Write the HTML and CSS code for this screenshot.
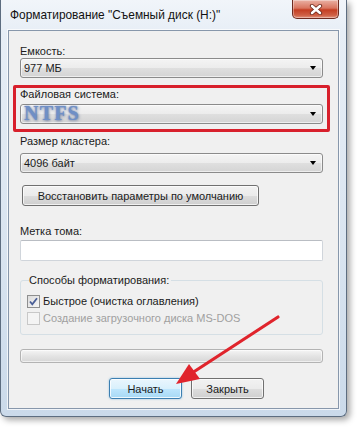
FILE: index.html
```
<!DOCTYPE html>
<html lang="ru">
<head>
    <meta charset="UTF-8">
    <title>Форматирование</title>
    <link rel="stylesheet" href="styles.css">
</head>
<body>
    <div class="window">
        <div class="titlebar">
            <span class="title">Форматирование "Съемный диск (H:)"</span>
            <div class="close-btn">
                <svg width="14" height="11" viewBox="0 0 14 11">
                    <path d="M3 2 L11 9 M11 2 L3 9" stroke="#6a2416" stroke-width="4.2" stroke-linecap="round"/>
                    <path d="M3 2 L11 9 M11 2 L3 9" stroke="#fff" stroke-width="2.6" stroke-linecap="round"/>
                </svg>
            </div>
        </div>

        <div class="client">
            <div class="label">Емкость:</div>
            <div class="combo">
                <span>977 МБ</span>
                <i class="combo-arrow"></i>
            </div>

            <div class="highlight">
                <div class="label">Файловая система:</div>
                <div class="combo">
                    <span class="ntfs">NTFS</span>
                    <i class="combo-arrow"></i>
                </div>
            </div>

            <div class="label cluster-label">Размер кластера:</div>
            <div class="combo cluster-combo">
                <span>4096 байт</span>
                <i class="combo-arrow"></i>
            </div>

            <div class="btn restore-btn">Восстановить параметры по умолчанию</div>

            <div class="label volume-label">Метка тома:</div>
            <div class="text-input"></div>

            <fieldset class="group">
                <legend>Способы форматирования:</legend>
                <div class="check-row first">
                    <span class="checkbox checked">
                        <svg width="11" height="11" viewBox="0 0 11 11">
                            <path d="M2 5.5 L4.3 8.3 L9 2.2" fill="none" stroke="#4a5f97" stroke-width="1.8"/>
                        </svg>
                    </span>
                    <span>Быстрое (очистка оглавления)</span>
                </div>
                <div class="check-row disabled">
                    <span class="checkbox"></span>
                    <span>Создание загрузочного диска MS-DOS</span>
                </div>
            </fieldset>

            <div class="progress"></div>

            <div class="actions">
                <div class="btn btn-default">Начать</div>
                <div class="btn">Закрыть</div>
            </div>
        </div>
    </div>

    <svg class="pointer" width="357" height="427" viewBox="0 0 357 427">
        <line x1="278" y1="317" x2="192" y2="373" stroke="#e0242c" stroke-width="3.2" stroke-linecap="round"/>
        <polygon points="176,384 200,379 189,364" fill="#e0242c"/>
    </svg>
</body>
</html>
```

FILE: styles.css
```
* {
    box-sizing: border-box;
    margin: 0;
    padding: 0;
}

body {
    background: #fff;
    font-family: 'Liberation Sans', sans-serif;
    font-size: 11px;
    color: #1b1b1b;
    position: relative;
    width: 357px;
    height: 427px;
    overflow: hidden;
}

/* window frame */
.window {
    width: 347px;
    padding: 0 7px 7px 7px;
    border: 1px solid #5d6d80;
    border-top: none;
    border-radius: 0 0 6px 6px;
    background: linear-gradient(180deg, #f1f5fa 0%, #e7eef6 8%, #d9e4f0 60%, #cbdaea 100%);
    box-shadow: 3px 3px 6px rgba(0, 0, 0, 0.35);
}

.titlebar {
    height: 30px;
    display: flex;
    align-items: flex-start;
}

.title {
    padding: 8px 0 0 2px;
    font-size: 11.9px;
    color: #111;
}

.close-btn {
    margin-left: auto;
    width: 47px;
    height: 19px;
    display: flex;
    align-items: center;
    justify-content: center;
    border: 1px solid #6e2b20;
    border-top: none;
    border-radius: 0 0 5px 5px;
    background: linear-gradient(180deg, #eab1a4 0%, #d9755f 45%, #c43e22 55%, #cf6146 85%, #e2957f 100%);
    box-shadow: inset 0 0 0 1px rgba(255, 255, 255, 0.35);
}

/* client area */
.client {
    background: #f0f0f0;
    border: 1px solid #8797ab;
    box-shadow: 0 0 0 1px rgba(255, 255, 255, 0.7);
    padding: 14px 15px 9px 11px;
}

.label {
    line-height: 13px;
    height: 13px;
}

.combo {
    height: 20px;
    display: flex;
    align-items: center;
    justify-content: space-between;
    padding: 0 6px 0 3px;
    border: 1px solid #8b8b8b;
    border-radius: 3px;
    background: linear-gradient(180deg, #f4f4f4 0%, #ececec 50%, #dfdfdf 51%, #d4d4d4 100%);
    box-shadow: inset 0 0 0 1px rgba(255, 255, 255, 0.6);
}

.combo-arrow {
    width: 0;
    height: 0;
    border-left: 3.5px solid transparent;
    border-right: 3.5px solid transparent;
    border-top: 4px solid #000;
}

.highlight {
    margin: 7px -7px 0 -7px;
    padding: 0 4px 5px 4px;
    border: 3px solid #d8202c;
    border-radius: 2px;
}

.highlight .combo {
    margin-top: 3px;
}

.ntfs {
    font-family: 'Liberation Serif', serif;
    font-weight: bold;
    font-size: 20px;
    letter-spacing: 1.2px;
    line-height: 14px;
    margin-top: -3px;
    color: #6f8fc6;
    text-shadow: 0 0 2px rgba(80, 110, 170, 0.8), 1px 1px 3px rgba(60, 80, 130, 0.5);
}

.cluster-label {
    margin-top: 3px;
}

.cluster-combo {
    margin-top: 5px;
}

.btn {
    height: 21px;
    display: flex;
    align-items: center;
    justify-content: center;
    border: 1px solid #707070;
    border-radius: 3px;
    background: linear-gradient(180deg, #f2f2f2 0%, #ebebeb 50%, #dddddd 51%, #cfcfcf 100%);
    box-shadow: inset 0 0 0 1px rgba(255, 255, 255, 0.7);
}

.restore-btn {
    margin-top: 12px;
    width: 237px;
    margin-left: 2px;
}

.volume-label {
    margin-top: 19px;
}

.text-input {
    margin-top: 2px;
    height: 21px;
    background: #fff;
    border: 1px solid #d0d5db;
    border-top-color: #b9bdc3;
    border-radius: 2px;
}

/* group box */
.group {
    margin-top: 13px;
    border: 1px solid #d5dfe5;
    border-radius: 3px;
    padding: 0 7px 9px 6px;
}

.group legend {
    line-height: 13px;
    padding: 0 2px 0 0;
    margin-left: 2px;
}

.check-row {
    display: flex;
    align-items: center;
    gap: 3px;
    height: 13px;
    line-height: 13px;
    margin-top: 4px;
}

.check-row.first {
    margin-top: 8px;
}

.checkbox {
    width: 13px;
    height: 13px;
    display: flex;
    align-items: center;
    justify-content: center;
    border: 1px solid #8e8f8f;
    background: linear-gradient(135deg, #dcdcdc 0%, #f6f6f6 100%);
}

.check-row.disabled {
    color: #a0a0a0;
}

.check-row.disabled .checkbox {
    border-color: #c8c8c8;
    background: #f4f4f4;
}

.progress {
    margin-top: 14px;
    height: 14px;
    border: 1px solid #b3b3b3;
    border-radius: 3px;
    background: linear-gradient(180deg, #f5f5f5 0%, #e4e4e4 50%, #d6d6d6 100%);
    box-shadow: inset 0 0 0 1px rgba(255, 255, 255, 0.6);
}

.actions {
    margin-top: 15px;
    display: flex;
    gap: 9px;
    padding-left: 89px;
}

.actions .btn {
    width: 73px;
}

.btn-default {
    border-color: #3c7fb1;
    background: linear-gradient(180deg, #eaf6fd 0%, #d9f0fc 50%, #bee6fd 51%, #a7d9f5 100%);
    box-shadow: inset 0 0 0 1px rgba(255, 255, 255, 0.8), 0 0 2px rgba(60, 150, 210, 0.6);
}

/* red pointer over the dialog */
.pointer {
    position: absolute;
    top: 0;
    left: 0;
    pointer-events: none;
}
```
